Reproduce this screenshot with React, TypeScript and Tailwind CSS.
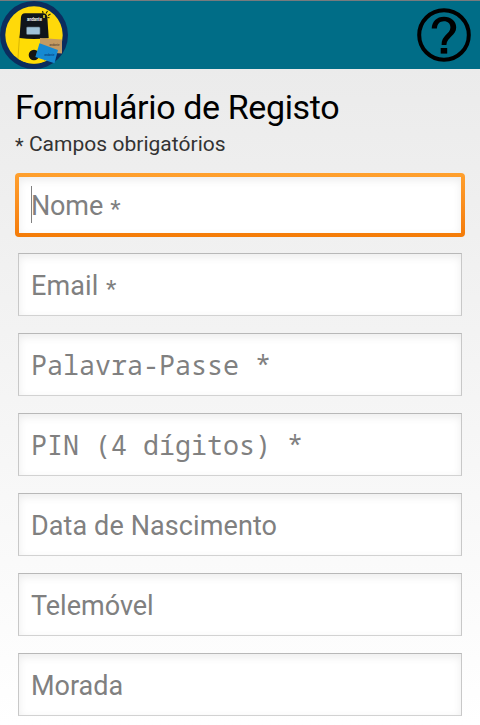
import React from "react";

type Field = { label: string; required?: boolean; kind?: "focus" | "mono"; spacing: string };

const fields: Field[] = [
  { label: "Nome", required: true, kind: "focus", spacing: "tracking-[-0.15px]" },
  { label: "Email", required: true, spacing: "tracking-[0.1px]" },
  { label: "Palavra-Passe *", kind: "mono", spacing: "tracking-[0px]" },
  { label: "PIN (4 dígitos) *", kind: "mono", spacing: "tracking-[0px]" },
  { label: "Data de Nascimento", spacing: "tracking-[0.1px]" },
  { label: "Telemóvel", spacing: "tracking-[0px]" },
  { label: "Morada", spacing: "tracking-[0px]" },
];

function Logo() {
  return (
    <svg width="70" height="68" viewBox="0 1 70 68">
      <defs>
        <clipPath id="disc"><circle cx="34" cy="35" r="28.5" /></clipPath>
      </defs>
      <circle cx="34" cy="35" r="34" fill="#0b2d5e" />
      <circle cx="34" cy="35" r="28.7" fill="#ffd90a" />
      <g clipPath="url(#disc)">
        <path d="M19.500 36 L18 58 Q18 62 22 64 H44 L48 38Z" fill="#ffdc05" stroke="#c9a600" strokeWidth=".7" />
        <path d="M19.500 38 L21 17 Q21.500 13.500 25 13.300 H43 Q47 13.500 47.300 17 L48.700 38 Q34 40 19.500 38Z" fill="#10151b" />
        <circle cx="34" cy="55" r="5.300" fill="#151515" />
      </g>
      <rect x="26.500" y="27" width="13.500" height="7.500" rx="1" fill="#9fc2d8" stroke="#536672" strokeWidth=".6" />
      <text x="34.500" y="21" textAnchor="middle" fontSize="4.800" textLength="15" lengthAdjust="spacingAndGlyphs" fontWeight="bold" fontFamily="Roboto, sans-serif" fill="#f4f4f4">andante</text>
      <path d="M44 15 V18" stroke="#e8dc20" strokeWidth="1.500" />
      <path d="M43.200 13.500 L42.500 11 M46 13.500 L47.500 11 M48 15.500 L50.500 14 M47.500 17.500 L49.500 17.800" stroke="#24270c" strokeWidth="1.100" />
      <path d="M40 38 L62 39.500 V53.500 L40 52Z" fill="#c49a62" />
      <text x="54.500" y="46" textAnchor="middle" fontSize="3.200" textLength="10" lengthAdjust="spacingAndGlyphs" fontWeight="bold" fontFamily="Roboto, sans-serif" fill="#67523a">andante</text>
      <path d="M39.500 43.300 L58 50 L54.500 63.300 L35.300 57Z" fill="#1689d2" />
      <text x="49.500" y="55.500" textAnchor="middle" fontSize="3.200" textLength="10" lengthAdjust="spacingAndGlyphs" fontWeight="bold" fontFamily="Roboto, sans-serif" fill="#0b4a87">andante</text>
    </svg>
  );
}

function Help() {
  return (
    <svg width="54" height="54" viewBox="0 0 54 54" fill="none">
      <circle cx="27" cy="27" r="24.800" stroke="#000" strokeWidth="4" />
      <path d="M14.700 20.500 C15 13.500 19.500 8.700 27 8.700 C34 8.700 39.200 13 39.200 19.200 C39.200 27.700 29.800 29 29.400 37 H24.600 C24.200 27 33.400 26 33.400 19.400 C33.400 15.600 31 13.200 26.900 13.200 C22.600 13.200 20.200 16 19.900 20.500Z" fill="#000" />
      <rect x="23.700" y="40" width="6.500" height="5.600" fill="#000" />
    </svg>
  );
}

function Input({ field }: { field: Field }) {
  const text =
    field.kind === "mono"
      ? "-mt-0.5 font-['Noto_Sans_Mono','DejaVu_Sans_Mono',monospace] text-[26.670px]"
      : "text-[27px]";
  const label = (
    <span className={`${text} ${field.spacing} whitespace-pre leading-8 text-[#808080]`}>
      {field.label}
      {field.required && <span className="relative left-[1.5px] top-[2px] text-[24px] leading-none"> *</span>}
    </span>
  );
  if (field.kind === "focus") {
    return (
      <div className="-mx-[3px] -mb-px h-16 rounded-[4px] bg-gradient-to-b from-[#ffa02e] to-[#f47b06] p-1">
        <div className="flex h-full items-center bg-white pl-3 pt-0.5 shadow-[inset_0_3px_8px_#ececec]">
          <span className="-mr-px -mt-1 h-[37px] w-px bg-[#808080]" />
          {label}
        </div>
      </div>
    );
  }
  return (
    <div className="flex h-[63px] items-center border border-t-[#b8b8b8] border-x-[#c8c8c8] border-b-[#d2d2d2] bg-white pl-3 pt-0.5 shadow-[inset_0_3px_8px_#ececec]">
      {label}
    </div>
  );
}

export default function App() {
  return (
    <div className="h-[725px] w-[480px] overflow-hidden bg-gradient-to-b from-[#e9e9e9] to-white font-[Roboto,sans-serif]">
      <header className="flex h-[69px] items-center justify-between border-t border-[#777b7e] bg-[#006d87] pr-[9px]">
        <Logo />
        <Help />
      </header>
      <main className="px-[18px] pt-[18px]">
        <h1 className="-ml-[3px] h-10 whitespace-nowrap text-[34px] leading-10 tracking-[-0.37px] text-black">Formulário de Registo</h1>
        <p className="-ml-[3px] h-8 whitespace-nowrap text-[21px] leading-[34px] tracking-[0.03px] text-[#333]">
          <span className="relative top-[2px] text-[20px]">*</span> Campos obrigatórios
        </p>
        <form className="flex flex-col gap-[17px] pt-[14px]">
          {fields.map((field) => <Input key={field.label} field={field} />)}
        </form>
      </main>
    </div>
  );
}
